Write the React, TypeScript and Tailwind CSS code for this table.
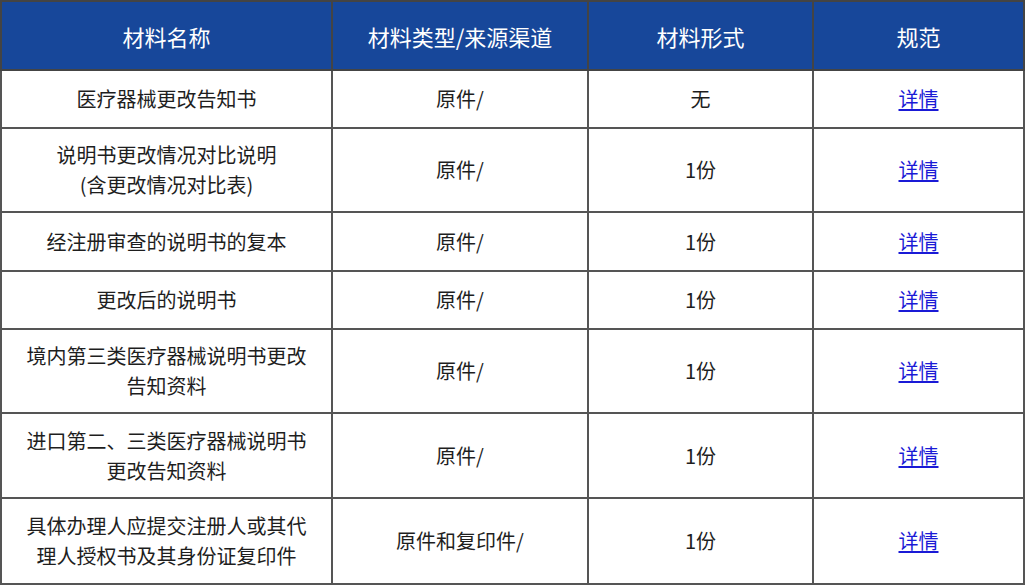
const rows: { name: string[]; type: string; form: string; h: string }[] = [
  { name: ["医疗器械更改告知书"], type: "原件/", form: "无", h: "h-[58px]" },
  { name: ["说明书更改情况对比说明", "(含更改情况对比表)"], type: "原件/", form: "1份", h: "h-[84px]" },
  { name: ["经注册审查的说明书的复本"], type: "原件/", form: "1份", h: "h-[59px]" },
  { name: ["更改后的说明书"], type: "原件/", form: "1份", h: "h-[58px]" },
  { name: ["境内第三类医疗器械说明书更改", "告知资料"], type: "原件/", form: "1份", h: "h-[84px]" },
  { name: ["进口第二、三类医疗器械说明书", "更改告知资料"], type: "原件/", form: "1份", h: "h-[85px]" },
  { name: ["具体办理人应提交注册人或其代", "理人授权书及其身份证复印件"], type: "原件和复印件/", form: "1份", h: "h-[86px]" },
];

export default function App() {
  return (
    <div className="w-[1026px] h-[585px] bg-white overflow-hidden" style={{ fontFamily: '"Noto Sans CJK SC", "Noto Sans", sans-serif' }}>
      <table className="w-[1025px] border-collapse table-fixed text-[20px] leading-[30px] text-[#1e1e1e]">
        <colgroup>
          <col className="w-[331px]" />
          <col className="w-[256px]" />
          <col className="w-[225px]" />
          <col />
        </colgroup>
        <thead>
          <tr className="h-[69px] bg-[#17479a] text-white text-[22px]">
            <th className="border-2 border-[#444] font-normal">材料名称</th>
            <th className="border-2 border-[#444] font-normal">材料类型/来源渠道</th>
            <th className="border-2 border-[#444] font-normal">材料形式</th>
            <th className="border-2 border-[#444] font-normal">规范</th>
          </tr>
        </thead>
        <tbody>
          {rows.map((r, i) => (
            <tr key={i} className={r.h}>
              <td className="border-2 border-[#555] text-center">
                {r.name.map((line, j) => (
                  <div key={j}>{line}</div>
                ))}
              </td>
              <td className="border-2 border-[#555] text-center">{r.type}</td>
              <td className="border-2 border-[#555] text-center">{r.form}</td>
              <td className="border-2 border-[#555] text-center">
                <a href="#" className="text-[#1a1ad6] underline underline-offset-2">详情</a>
              </td>
            </tr>
          ))}
        </tbody>
      </table>
    </div>
  );
}
